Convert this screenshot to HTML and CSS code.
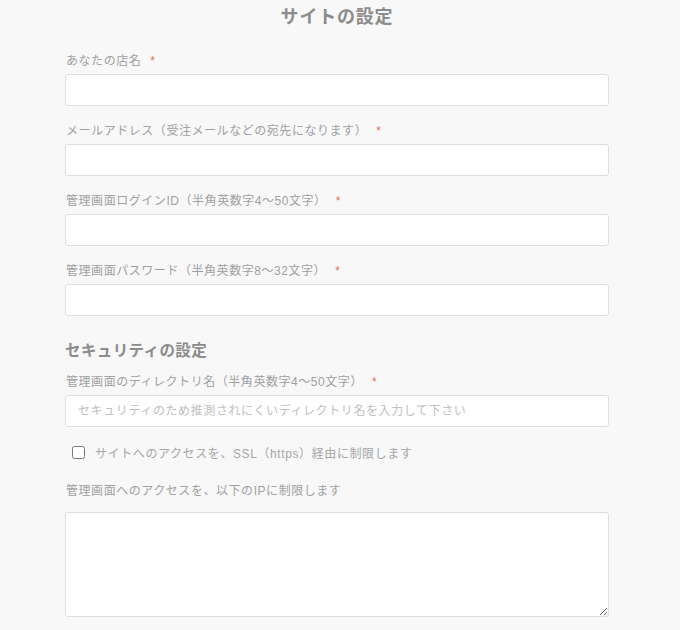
FILE: index.html
```html
<!DOCTYPE html>
<html lang="ja">
<head>
<meta charset="utf-8">
<title>サイトの設定</title>
<link rel="stylesheet" href="styles.css">
</head>
<body>
<main class="form">
  <h1 class="title">サイトの設定</h1>

  <div class="field">
    <label class="label">あなたの店名<span class="req">*</span></label>
    <input class="input" type="text">
  </div>
  <div class="field">
    <label class="label">メールアドレス（受注メールなどの宛先になります）<span class="req">*</span></label>
    <input class="input" type="text">
  </div>
  <div class="field">
    <label class="label">管理画面ログインID（半角英数字4〜50文字）<span class="req">*</span></label>
    <input class="input" type="text">
  </div>
  <div class="field">
    <label class="label">管理画面パスワード（半角英数字8〜32文字）<span class="req">*</span></label>
    <input class="input" type="password">
  </div>

  <h2 class="section">セキュリティの設定</h2>

  <div class="field">
    <label class="label">管理画面のディレクトリ名（半角英数字4〜50文字）<span class="req">*</span></label>
    <input class="input" type="text" placeholder="セキュリティのため推測されにくいディレクトリ名を入力して下さい">
  </div>

  <label class="check">
    <input type="checkbox" class="box">
    <span>サイトへのアクセスを、SSL（https）経由に制限します</span>
  </label>

  <div class="field field-area">
    <label class="label">管理画面へのアクセスを、以下のIPに制限します</label>
    <textarea class="area"></textarea>
  </div>
</main>
</body>
</html>
```

FILE: styles.css
```css
html, body {
  margin: 0;
  padding: 0;
  background: #f8f8f8;
}
body {
  font-family: "Liberation Sans", "Noto Sans CJK JP", sans-serif;
  color: #999;
}
.form {
  width: 544px;
  margin-left: 65px;
  padding-top: 5px;
  display: flex;
  flex-direction: column;
}
.title {
  margin: 0 0 23px;
  font-size: 18px;
  line-height: 24px;
  font-weight: bold;
  color: #8c8c8c;
  text-align: center;
  letter-spacing: 0.8px;
}
.field {
  display: flex;
  flex-direction: column;
  gap: 4px;
  margin-bottom: 16px;
}
.label {
  font-size: 12px;
  line-height: 18px;
  letter-spacing: 0.55px;
  color: #a0a0a0;
  padding-left: 1px;
}
.req {
  color: #e07060;
  margin-left: 9px;
}
.input {
  box-sizing: border-box;
  height: 32px;
  width: 100%;
  margin: 0;
  border: 1px solid #dcdfe0;
  border-radius: 3px;
  background: #fff;
  padding: 0 12px;
  font-family: inherit;
  font-size: 12px;
  letter-spacing: 0.6px;
  outline: none;
}
.input::placeholder {
  color: #c0c0c0;
}
.section {
  margin: 8px 0 11px;
  font-size: 15.5px;
  line-height: 22px;
  font-weight: bold;
  color: #8c8c8c;
  letter-spacing: 0.4px;
}
.check {
  display: flex;
  align-items: center;
  gap: 10px;
  height: 20px;
  margin: -1px 0 20px 7px;
  font-size: 12px;
  letter-spacing: 0.6px;
  color: #a6a6a6;
}
.box {
  margin: 0;
  width: 13px;
  height: 13px;
}
.field-area {
  gap: 12px;
}
.area {
  box-sizing: border-box;
  height: 105px;
  width: 100%;
  margin: 0;
  border: 1px solid #dcdfe0;
  border-radius: 3px;
  background: #fff;
  resize: vertical;
}
```
